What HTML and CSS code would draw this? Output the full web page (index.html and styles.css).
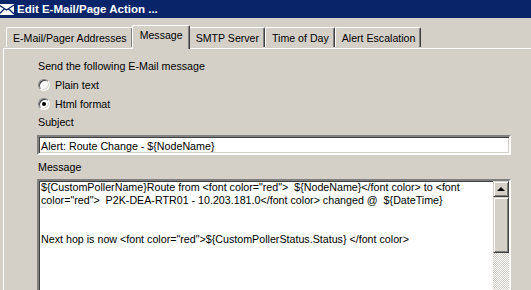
FILE: index.html
```html
<!DOCTYPE html>
<html lang="en">
<head>
  <meta charset="UTF-8">
  <title>Edit E-Mail/Page Action</title>
  <link rel="stylesheet" href="styles.css">
</head>
<body>

  <div class="titulo">
    <svg class="sobre" width="15" height="11" viewBox="0 0 15 11">
      <rect x="0.5" y="0.5" width="14" height="10" fill="#fff" stroke="#fff"/>
      <path d="M0 1 L7.5 6 L15 1 M0 10 L5.5 4.7 M15 10 L9.5 4.7" stroke="#0a246a" stroke-width="1.3" fill="none"/>
    </svg>
    <span>Edit E-Mail/Page Action ...</span>
  </div>

  <div class="pestanas">
    <div class="pestana">E-Mail/Pager Addresses</div>
    <div class="pestana activa">Message</div>
    <div class="pestana">SMTP Server</div>
    <div class="pestana">Time of Day</div>
    <div class="pestana">Alert Escalation</div>
  </div>

  <div class="panel">
    <div class="etiqueta">Send the following E-Mail message</div>
    <label class="opcion"><span class="radio"></span>Plain text</label>
    <label class="opcion"><span class="radio marcado"></span>Html format</label>
    <div class="etiqueta">Subject</div>
    <div class="caja-texto">Alert: Route Change - ${NodeName}</div>
    <div class="etiqueta etiqueta-msg">Message</div>
    <div class="area-texto">
      <div class="contenido">${CustomPollerName}Route from &lt;font color="red"&gt;  ${NodeName}&lt;/font color&gt; to &lt;font
color="red"&gt;  P2K-DEA-RTR01 - 10.203.181.0&lt;/font color&gt; changed @  ${DateTime}


Next hop is now &lt;font color="red"&gt;${CustomPollerStatus.Status} &lt;/font color&gt;</div>
      <div class="barra">
        <div class="boton-flecha"><span class="flecha"></span></div>
        <div class="pulgar"></div>
        <div class="pista"></div>
      </div>
    </div>
  </div>

</body>
</html>
```

FILE: styles.css
```css
body {
  margin: 0;
  background-color: #d4d0c8;
  font-family: "Liberation Sans", Arial, sans-serif;
  font-size: 10.7px;
  color: #000;
  overflow: hidden;
}

.titulo {
  height: 18px;
  background-color: #0a246a;
  color: #fff;
  display: flex;
  align-items: center;
  gap: 3px;
  font-weight: bold;
  font-size: 11.5px;
}

.sobre {
  margin-left: -1px;
}

.pestanas {
  display: flex;
  align-items: flex-end;
  height: 24px;
  margin-top: 6px;
  padding-left: 6px;
  font-size: 10.6px;
}

.pestana {
  height: 20px;
  box-sizing: border-box;
  padding: 4px 5px 0 6px;
  border-top: 1px solid #fff;
  border-left: 1px solid #fff;
  border-right: 1px solid #404040;
  box-shadow: inset -1px 0 0 #808080;
  border-radius: 2px 2px 0 0;
  margin-bottom: 1px;
  white-space: nowrap;
}

.pestana.activa {
  height: 24px;
  padding-top: 3px;
  margin: 0 -1px -1px -1px;
  position: relative;
  z-index: 1;
  background-color: #d4d0c8;
  padding-left: 7px;
  padding-right: 6px;
}

.panel {
  margin-left: 3px;
  border-top: 1px solid #fff;
  border-left: 1px solid #fff;
  padding: 10px 20px 0 33px;
  display: flex;
  flex-direction: column;
}

.etiqueta {
  height: 14px;
  line-height: 14px;
  padding-left: 1px;
}

.opcion {
  display: flex;
  align-items: center;
  gap: 5px;
  height: 14px;
  margin-top: 5px;
  padding-left: 1px;
}

.opcion + .etiqueta {
  margin-top: 4px;
}

.radio {
  width: 12px;
  height: 12px;
  box-sizing: border-box;
  border-radius: 50%;
  background-color: #fff;
  border: 1px solid;
  border-color: #808080 #fff #fff #808080;
  box-shadow: inset 1px 1px 0 #404040, inset -1px -1px 0 #d4d0c8;
  display: flex;
  align-items: center;
  justify-content: center;
}

.radio.marcado::after {
  content: "";
  width: 4px;
  height: 4px;
  border-radius: 50%;
  background-color: #000;
}

.caja-texto {
  margin-top: 6px;
  height: 20px;
  box-sizing: border-box;
  background-color: #fff;
  border: 2px solid;
  border-color: #808080 #fff #fff #808080;
  box-shadow: inset 1px 1px 0 #404040, inset -1px -1px 0 #d4d0c8;
  padding: 3px 2px 0 2px;
  line-height: 13px;
}

.etiqueta-msg {
  margin-top: 5px;
}

.area-texto {
  margin-top: 5px;
  height: 140px;
  display: flex;
  background-color: #fff;
  border: 2px solid;
  border-color: #808080 #fff #fff #808080;
  box-shadow: inset 1px 1px 0 #404040;
}

.contenido {
  flex: 1;
  white-space: pre;
  line-height: 13px;
  padding: 0 2px;
  overflow: hidden;
}

.barra {
  width: 16px;
  display: flex;
  flex-direction: column;
}

.boton-flecha,
.pulgar {
  box-sizing: border-box;
  background-color: #d4d0c8;
  border: 1px solid;
  border-color: #d4d0c8 #404040 #404040 #d4d0c8;
  box-shadow: inset 1px 1px 0 #fff, inset -1px -1px 0 #808080;
}

.boton-flecha {
  height: 16px;
  display: flex;
  align-items: center;
  justify-content: center;
}

.flecha {
  width: 0;
  height: 0;
  border-left: 4px solid transparent;
  border-right: 4px solid transparent;
  border-bottom: 4px solid #000;
  margin-top: -1px;
}

.pulgar {
  height: 56px;
}

.pista {
  flex: 1;
  background-color: #fff;
  background-image: repeating-conic-gradient(#d4d0c8 0 25%, #fff 0 50%);
  background-size: 2px 2px;
}
```
